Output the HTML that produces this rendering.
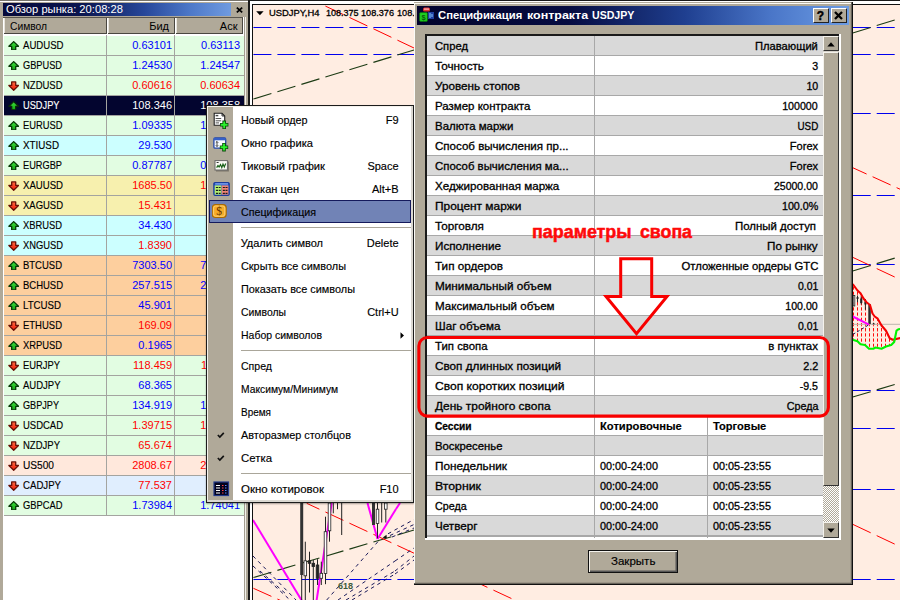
<!DOCTYPE html>
<html lang="ru"><head><meta charset="utf-8"><title>MetaTrader - Спецификация контракта USDJPY</title>
<style>
html,body{margin:0;padding:0;}
body{width:900px;height:600px;overflow:hidden;position:relative;background:#b0a999;font-family:"Liberation Sans",sans-serif;font-size:11px;}
#root{position:absolute;left:0;top:0;width:900px;height:600px;overflow:hidden;}
</style></head>
<body><div id="root">
<section id="chart">
<div style="position:absolute;left:0;top:0;width:900px;height:600px;background:#ffede2"></div>
<svg width="900" height="600" viewBox="0 0 900 600" style="position:absolute;left:0;top:0"><line x1="253.4" y1="27.5" x2="414.0" y2="27.5" stroke="#0000ee" stroke-width="1.1" stroke-dasharray="18.00 6.00" stroke-dashoffset="0.00"/><line x1="253.4" y1="54.5" x2="414.0" y2="54.5" stroke="#0000ee" stroke-width="1.1" stroke-dasharray="18.00 6.00" stroke-dashoffset="0.00"/><line x1="321.0" y1="4.0" x2="414.0" y2="48.0" stroke="#ff0000" stroke-width="1.0" stroke-dasharray="19.91 6.64" stroke-dashoffset="21.68"/><line x1="253.4" y1="99.0" x2="414.0" y2="50.0" stroke="#1c3b14" stroke-width="1.1" stroke-dasharray="18.82 6.27" stroke-dashoffset="0.00"/><line x1="253.4" y1="579.5" x2="414.0" y2="579.5" stroke="#0000ee" stroke-width="1.1" stroke-dasharray="18.00 6.00" stroke-dashoffset="0.00"/><line x1="253.4" y1="577.5" x2="414.0" y2="530.0" stroke="#1c3b14" stroke-width="1.1" stroke-dasharray="18.77 6.26" stroke-dashoffset="0.00"/><line x1="306.7" y1="503.3" x2="414.0" y2="553.2" stroke="#ff0000" stroke-width="1.0" stroke-dasharray="19.85 6.62" stroke-dashoffset="5.85"/><line x1="253.4" y1="588.3" x2="290.0" y2="604.7" stroke="#ff0000" stroke-width="1.0" stroke-dasharray="19.72 6.57" stroke-dashoffset="0.00"/><line x1="253.0" y1="556.0" x2="296.0" y2="600.0" stroke="#1a1a5a" stroke-width="1" stroke-dasharray="3.6 3.8"/><line x1="253.0" y1="566.0" x2="290.0" y2="600.0" stroke="#1a1a5a" stroke-width="1" stroke-dasharray="3.6 3.8"/><line x1="260.0" y1="571.0" x2="286.0" y2="594.0" stroke="#1a1a5a" stroke-width="1" stroke-dasharray="3.6 3.8"/><line x1="326.7" y1="600.0" x2="378.5" y2="541.0" stroke="#1a1a5a" stroke-width="1" stroke-dasharray="3.6 3.8"/><line x1="338.0" y1="600.0" x2="395.0" y2="561.0" stroke="#1a1a5a" stroke-width="1" stroke-dasharray="3.6 3.8"/><line x1="346.0" y1="600.0" x2="395.0" y2="571.0" stroke="#1a1a5a" stroke-width="1" stroke-dasharray="3.6 3.8"/><line x1="352.0" y1="600.0" x2="395.0" y2="574.0" stroke="#1a1a5a" stroke-width="1" stroke-dasharray="3.6 3.8"/><line x1="395.0" y1="561.0" x2="414.0" y2="548.0" stroke="#1a1a5a" stroke-width="1" stroke-dasharray="3.6 3.8"/><line x1="395.0" y1="571.0" x2="414.0" y2="556.0" stroke="#1a1a5a" stroke-width="1" stroke-dasharray="3.6 3.8"/><line x1="395.0" y1="574.0" x2="414.0" y2="560.0" stroke="#1a1a5a" stroke-width="1" stroke-dasharray="3.6 3.8"/><line x1="388.0" y1="533.8" x2="414.0" y2="519.5" stroke="#1a1a5a" stroke-width="1" stroke-dasharray="3.6 3.8"/><line x1="390.0" y1="535.5" x2="414.0" y2="524.5" stroke="#1a1a5a" stroke-width="1" stroke-dasharray="3.6 3.8"/><line x1="392.0" y1="537.0" x2="414.0" y2="528.0" stroke="#1a1a5a" stroke-width="1" stroke-dasharray="3.6 3.8"/><path d="M382.5 537.8 L386.5 534.8 L386.8 538.2 Z" fill="#111"/><line x1="253.0" y1="520.0" x2="302.0" y2="601.0" stroke="#ff00ff" stroke-width="2.0"/><line x1="316.5" y1="601.0" x2="331.7" y2="503.0" stroke="#ff00ff" stroke-width="2.0"/><line x1="367.5" y1="503.0" x2="377.5" y2="539.0" stroke="#ff00ff" stroke-width="2.0"/><line x1="377.5" y1="539.0" x2="396.0" y2="509.0" stroke="#ff00ff" stroke-width="2.0"/><line x1="396.0" y1="509.0" x2="400.0" y2="503.0" stroke="#ff00ff" stroke-width="2.0"/><rect x="300.2" y="503" width="3" height="72" fill="#333"/><line x1="301.7" y1="575.0" x2="301.7" y2="600.0" stroke="#222" stroke-width="1"/><line x1="305.3" y1="541.7" x2="305.3" y2="600.0" stroke="#222" stroke-width="1"/><rect x="304.0" y="560.8" width="2.6" height="15.0" fill="#fff" stroke="#222" stroke-width="0.8"/><line x1="309.5" y1="551.7" x2="309.5" y2="592.5" stroke="#222" stroke-width="1"/><rect x="308.2" y="560.8" width="2.6" height="2.5" fill="#222" stroke="#222" stroke-width="0.8"/><line x1="313.3" y1="560.0" x2="313.3" y2="600.0" stroke="#222" stroke-width="1"/><rect x="312.0" y="563.3" width="2.6" height="3.3" fill="#222" stroke="#222" stroke-width="0.8"/><line x1="317.5" y1="559.2" x2="317.5" y2="585.0" stroke="#222" stroke-width="1"/><rect x="316.2" y="565.0" width="2.6" height="13.3" fill="#222" stroke="#222" stroke-width="0.8"/><line x1="321.3" y1="561.7" x2="321.3" y2="585.0" stroke="#222" stroke-width="1"/><rect x="320.0" y="573.3" width="2.6" height="5.0" fill="#fff" stroke="#222" stroke-width="0.8"/><line x1="325.5" y1="516.7" x2="325.5" y2="584.2" stroke="#222" stroke-width="1"/><rect x="324.2" y="531.7" width="2.6" height="41.7" fill="#fff" stroke="#222" stroke-width="0.8"/><line x1="329.5" y1="503.0" x2="329.5" y2="541.7" stroke="#222" stroke-width="1"/><rect x="328.2" y="503.0" width="2.6" height="27.8" fill="#fff" stroke="#222" stroke-width="0.8"/><line x1="333.3" y1="503.0" x2="333.3" y2="513.3" stroke="#222" stroke-width="1"/><line x1="337.5" y1="503.0" x2="337.5" y2="509.2" stroke="#222" stroke-width="1"/><line x1="341.7" y1="503.0" x2="341.7" y2="535.0" stroke="#222" stroke-width="1"/><rect x="372" y="503" width="3" height="22" fill="#333"/><line x1="377.5" y1="503.0" x2="377.5" y2="538.3" stroke="#222" stroke-width="1"/><rect x="376.2" y="509.2" width="2.6" height="14.2" fill="#fff" stroke="#222" stroke-width="0.8"/><line x1="381.7" y1="503.0" x2="381.7" y2="522.5" stroke="#222" stroke-width="1"/><line x1="385.8" y1="503.0" x2="385.8" y2="522.5" stroke="#222" stroke-width="1"/><rect x="384.5" y="503.0" width="2.6" height="6.2" fill="#fff" stroke="#222" stroke-width="0.8"/><text x="338" y="588.5" font-size="9" font-weight="bold" fill="#3d5a3a" font-family="Liberation Sans">618</text><line x1="414.0" y1="553.2" x2="520.0" y2="602.5" stroke="#ff0000" stroke-width="1.0" stroke-dasharray="19.85 6.62" stroke-dashoffset="18.31"/><line x1="852.7" y1="27.5" x2="900.0" y2="27.5" stroke="#0000ee" stroke-width="1.1" stroke-dasharray="18.00 6.00" stroke-dashoffset="0.00"/><line x1="852.7" y1="54.5" x2="900.0" y2="54.5" stroke="#0000ee" stroke-width="1.1" stroke-dasharray="18.00 6.00" stroke-dashoffset="0.00"/><line x1="852.7" y1="113.5" x2="900.0" y2="113.5" stroke="#0000ee" stroke-width="1.1" stroke-dasharray="18.00 6.00" stroke-dashoffset="0.00"/><line x1="852.7" y1="195.5" x2="900.0" y2="195.5" stroke="#0000ee" stroke-width="1.1" stroke-dasharray="18.00 6.00" stroke-dashoffset="0.00"/><line x1="852.7" y1="264.5" x2="900.0" y2="264.5" stroke="#0000ee" stroke-width="1.1" stroke-dasharray="18.00 6.00" stroke-dashoffset="0.00"/><line x1="852.7" y1="390.5" x2="900.0" y2="390.5" stroke="#0000ee" stroke-width="1.1" stroke-dasharray="18.00 6.00" stroke-dashoffset="0.00"/><line x1="852.7" y1="428.5" x2="900.0" y2="428.5" stroke="#0000ee" stroke-width="1.1" stroke-dasharray="18.00 6.00" stroke-dashoffset="0.00"/><line x1="852.7" y1="489.5" x2="900.0" y2="489.5" stroke="#0000ee" stroke-width="1.1" stroke-dasharray="18.00 6.00" stroke-dashoffset="0.00"/><line x1="852.7" y1="579.5" x2="900.0" y2="579.5" stroke="#0000ee" stroke-width="1.1" stroke-dasharray="18.00 6.00" stroke-dashoffset="0.00"/><line x1="852.7" y1="33.0" x2="900.0" y2="18.4" stroke="#1c3b14" stroke-width="1.1" stroke-dasharray="18.84 6.28" stroke-dashoffset="0.00"/><line x1="852.7" y1="167.7" x2="900.0" y2="189.2" stroke="#ff0000" stroke-width="1.0" stroke-dasharray="19.77 6.59" stroke-dashoffset="4.50"/><line x1="852.7" y1="257.3" x2="900.0" y2="279.5" stroke="#ff0000" stroke-width="1.0" stroke-dasharray="19.88 6.63" stroke-dashoffset="0.00"/><line x1="852.7" y1="271.0" x2="900.0" y2="256.5" stroke="#1c3b14" stroke-width="1.1" stroke-dasharray="18.83 6.28" stroke-dashoffset="0.00"/><line x1="852.7" y1="397.0" x2="900.0" y2="383.0" stroke="#1c3b14" stroke-width="1.1" stroke-dasharray="18.77 6.26" stroke-dashoffset="0.00"/><line x1="852.7" y1="524.3" x2="900.0" y2="546.6" stroke="#ff0000" stroke-width="1.0" stroke-dasharray="19.90 6.63" stroke-dashoffset="0.00"/><defs><pattern id="hp" x="853" y="0.5" width="4" height="5.2" patternUnits="userSpaceOnUse"><rect x="0" y="0" width="1" height="3.2" fill="#ff0a0a"/></pattern></defs><polygon points="852.7,284 857.5,290.5 860.5,293.2 863.5,298.5 866.5,302.2 870,305 872.5,313.5 874.7,316.5 877.7,318.7 881.5,325.5 886,330.7 889.7,338.2 892.7,339.7 894.2,342 891.2,345 886,346.5 881.5,348.7 875.5,347.5 873.2,348.7 869,348.7 865,345 860.5,344.2 857.5,341.2 852.7,339.7" fill="url(#hp)"/><line x1="853.0" y1="324.3" x2="900.0" y2="324.3" stroke="#bdb5ad" stroke-width="1"/><rect x="853.2" y="295.5" width="1.6" height="10.5" fill="#fff" stroke="#222" stroke-width="0.8"/><line x1="857.5" y1="295.5" x2="857.5" y2="302.3" stroke="#222" stroke-width="1"/><rect x="856.6" y="297" width="1.9" height="2" fill="#222"/><line x1="861.2" y1="296.2" x2="861.2" y2="304.5" stroke="#222" stroke-width="1"/><rect x="860.2" y="298.5" width="2.1" height="4.5" fill="#222"/><line x1="865.4" y1="299.0" x2="865.4" y2="309.7" stroke="#222" stroke-width="1"/><rect x="864.4" y="301.5" width="2.1" height="3" fill="#222"/><rect x="868.3" y="304.2" width="2.5" height="19.8" fill="#2a2a2a"/><path d="M872.3 324.3 L873.6 322.4 L875 324.3 Z" fill="#222"/><line x1="852.7" y1="316.5" x2="869.0" y2="324.7" stroke="#ff00ff" stroke-width="2"/><line x1="852.7" y1="334.5" x2="869" y2="324.7" stroke="#1a1a5a" stroke-width="1" stroke-dasharray="3 2"/><polyline points="852.7,284 857.5,290.5 860.5,293.2 863.5,298.5 866.5,302.2 870,305 872.5,313.5 874.7,316.5 877.7,318.7 881.5,325.5 886,330.7 889.7,338.2 892.7,339.7 900.5,338" fill="none" stroke="#f40000" stroke-width="2.1" stroke-linejoin="round"/><polyline points="852.7,339.7 857.5,341.2 860.5,344.2 865,345 869,348.7 873.2,348.7 875.5,347.5 881.5,348.7 886,346.5 891.2,345 894.2,342 896.5,330.7 898.7,329.2 900.5,329" fill="none" stroke="#00f400" stroke-width="2.1" stroke-linejoin="round"/></svg>
<div style="position:absolute;left:248px;top:0px;width:652px;height:1.4px;background:#1a1a1a;"></div>
<div style="position:absolute;left:250px;top:1.4px;width:650px;height:2.7px;background:#fff;"></div>
<div style="position:absolute;left:252px;top:4px;width:648px;height:1px;background:#111;"></div>
<div style="position:absolute;left:248px;top:0px;width:1.9px;height:600px;background:#1a1a1a;"></div>
<div style="position:absolute;left:249.9px;top:1.4px;width:2.1px;height:598.6px;background:#fff;"></div>
<div style="position:absolute;left:252px;top:4px;width:1px;height:596px;background:#111;"></div>
<svg width="10" height="6" viewBox="0 0 10 6" style="position:absolute;left:255.7px;top:11.3px"><path d="M0.2 0.3 L7.6 0.3 L3.9 4.2 Z" fill="#000"/></svg>
<span style="position:absolute;top:7.96px;font-size:9.5px;line-height:9.5px;color:#000;white-space:nowrap;-webkit-text-stroke:0.3px #000;left:268.60px;transform-origin:0 0;transform:scaleX(0.9873);">USDJPY,H4</span>
<span style="position:absolute;top:7.96px;font-size:9.5px;line-height:9.5px;color:#000;white-space:nowrap;-webkit-text-stroke:0.3px #000;left:325.60px;transform-origin:0 0;transform:scaleX(0.9491);">108.375</span>
<span style="position:absolute;top:7.96px;font-size:9.5px;line-height:9.5px;color:#000;white-space:nowrap;-webkit-text-stroke:0.3px #000;left:361.00px;transform-origin:0 0;transform:scaleX(0.9607);">108.376</span>
<span style="position:absolute;top:7.96px;font-size:9.5px;line-height:9.5px;color:#000;white-space:nowrap;-webkit-text-stroke:0.3px #000;left:397.40px;transform-origin:0 0;transform:scaleX(0.9607);">108.376</span>
</section>
<section id="market-watch">
<div style="position:absolute;left:0px;top:0px;width:248px;height:600px;background:#b0a999;"></div>
<div style="position:absolute;left:0px;top:0px;width:248px;height:0.8px;background:#77736a;"></div>
<div style="position:absolute;left:0px;top:0.8px;width:248px;height:1.2px;background:#fff;"></div>
<div style="position:absolute;left:3px;top:3px;width:228px;height:13.2px;background:linear-gradient(90deg,#06093a 0%,#0a1650 35%,#27479a 62%,#4d78c8 82%,#6f9be0 100%)"></div>
<span style="position:absolute;top:4.09px;font-size:11px;line-height:11px;color:#fff;white-space:nowrap;left:6.00px;transform-origin:0 0;transform:scaleX(1.0161);">Обзор рынка: 20:08:28</span>
<svg width="7" height="6" viewBox="0 0 7 6" style="position:absolute;left:235.7px;top:6.8px"><path d="M0.8 0.6 L6.2 5.4 M6.2 0.6 L0.8 5.4" stroke="#000" stroke-width="1.7"/></svg>
<div style="position:absolute;left:3px;top:17px;width:241.3px;height:19px;background:#fff;"></div>
<div style="position:absolute;left:3px;top:17px;width:240px;height:1px;background:#5a564e;"></div>
<div style="position:absolute;left:3.5px;top:18px;width:103px;height:15.8px;background:#b0a999;box-sizing:border-box;border-right:1px solid #4a4740;border-bottom:1px solid #4a4740;box-shadow:inset 1px 0 0 #e8e4dc"></div>
<div style="position:absolute;left:108px;top:18px;width:66.7px;height:15.8px;background:#b0a999;box-sizing:border-box;border-right:1px solid #4a4740;border-bottom:1px solid #4a4740;box-shadow:inset 1px 0 0 #e8e4dc"></div>
<div style="position:absolute;left:176.2px;top:18px;width:66.7px;height:15.8px;background:#b0a999;box-sizing:border-box;border-right:1px solid #4a4740;border-bottom:1px solid #4a4740;box-shadow:inset 1px 0 0 #e8e4dc"></div>
<span style="position:absolute;top:21.19px;font-size:11px;line-height:11px;color:#000;white-space:nowrap;left:9.60px;transform-origin:0 0;transform:scaleX(0.9327);">Символ</span>
<span style="position:absolute;top:21.09px;font-size:11px;line-height:11px;color:#000;white-space:nowrap;right:731.00px;transform-origin:100% 0;">Бид</span>
<span style="position:absolute;top:21.09px;font-size:11px;line-height:11px;color:#000;white-space:nowrap;right:662.50px;transform-origin:100% 0;">Аск</span>
<div style="position:absolute;left:3px;top:35px;width:241px;height:565px;background:#fff;"></div>
<svg width="0" height="0" style="position:absolute"><defs><linearGradient id="gu" x1="0" y1="0" x2="0" y2="1"><stop offset="0" stop-color="#3ee03e"/><stop offset="1" stop-color="#12a812"/></linearGradient><linearGradient id="gd" x1="0" y1="0" x2="0" y2="1"><stop offset="0" stop-color="#ff6a40"/><stop offset="1" stop-color="#f01808"/></linearGradient></defs></svg>
<div style="position:absolute;left:3.5px;top:35.5px;width:240.5px;height:19.3px;background:#e2fde2;"></div>
<div style="position:absolute;left:3.5px;top:54.8px;width:240.5px;height:1.2px;background:#a4a4a0;"></div>
<svg width="11.4" height="9.8" viewBox="0 0 13 11" style="position:absolute;left:7.8px;top:40.7px"><path d="M6.5 0.6 L12 6 L8.8 6 L8.8 10 L4.2 10 L4.2 6 L1 6 Z" fill="url(#gu)" stroke="#063a06" stroke-width="1.5" stroke-linejoin="round"/></svg>
<span style="position:absolute;top:39.89px;font-size:11px;line-height:11px;color:#000;white-space:nowrap;-webkit-text-stroke:0.15px #000;left:23.10px;transform-origin:0 0;transform:scaleX(0.8721);">AUDUSD</span>
<span style="position:absolute;top:39.89px;font-size:11px;line-height:11px;color:#0000ff;white-space:nowrap;right:728.00px;transform-origin:100% 0;">0.63101</span>
<span style="position:absolute;top:39.89px;font-size:11px;line-height:11px;color:#0000ff;white-space:nowrap;right:660.00px;transform-origin:100% 0;">0.63113</span>
<div style="position:absolute;left:3.5px;top:55.5px;width:240.5px;height:19.3px;background:#e2fde2;"></div>
<div style="position:absolute;left:3.5px;top:74.8px;width:240.5px;height:1.2px;background:#a4a4a0;"></div>
<svg width="11.4" height="9.8" viewBox="0 0 13 11" style="position:absolute;left:7.8px;top:60.7px"><path d="M6.5 0.6 L12 6 L8.8 6 L8.8 10 L4.2 10 L4.2 6 L1 6 Z" fill="url(#gu)" stroke="#063a06" stroke-width="1.5" stroke-linejoin="round"/></svg>
<span style="position:absolute;top:59.89px;font-size:11px;line-height:11px;color:#000;white-space:nowrap;-webkit-text-stroke:0.15px #000;left:23.10px;transform-origin:0 0;transform:scaleX(0.8393);">GBPUSD</span>
<span style="position:absolute;top:59.89px;font-size:11px;line-height:11px;color:#0000ff;white-space:nowrap;right:728.00px;transform-origin:100% 0;">1.24530</span>
<span style="position:absolute;top:59.89px;font-size:11px;line-height:11px;color:#0000ff;white-space:nowrap;right:660.00px;transform-origin:100% 0;">1.24547</span>
<div style="position:absolute;left:3.5px;top:75.5px;width:240.5px;height:19.3px;background:#e2fde2;"></div>
<div style="position:absolute;left:3.5px;top:94.8px;width:240.5px;height:1.2px;background:#a4a4a0;"></div>
<svg width="11.4" height="9.8" viewBox="0 0 13 11" style="position:absolute;left:7.8px;top:80.9px"><path d="M6.5 10.4 L12 5 L8.8 5 L8.8 1 L4.2 1 L4.2 5 L1 5 Z" fill="url(#gd)" stroke="#6a1006" stroke-width="1.5" stroke-linejoin="round"/></svg>
<span style="position:absolute;top:79.89px;font-size:11px;line-height:11px;color:#000;white-space:nowrap;-webkit-text-stroke:0.15px #000;left:23.10px;transform-origin:0 0;transform:scaleX(0.8622);">NZDUSD</span>
<span style="position:absolute;top:79.89px;font-size:11px;line-height:11px;color:#ff0000;white-space:nowrap;right:728.00px;transform-origin:100% 0;">0.60616</span>
<span style="position:absolute;top:79.89px;font-size:11px;line-height:11px;color:#ff0000;white-space:nowrap;right:660.00px;transform-origin:100% 0;">0.60634</span>
<div style="position:absolute;left:3.5px;top:95.5px;width:240.5px;height:19.3px;background:#03052f;"></div>
<div style="position:absolute;left:3.5px;top:114.8px;width:240.5px;height:1.2px;background:#a4a4a0;"></div>
<svg width="11.4" height="9.8" viewBox="0 0 13 11" style="position:absolute;left:7.8px;top:100.7px"><path d="M6.5 0.6 L12 6 L8.8 6 L8.8 10 L4.2 10 L4.2 6 L1 6 Z" fill="url(#gu)" stroke="#0a2a0a" stroke-width="1.5" stroke-linejoin="round"/></svg>
<span style="position:absolute;top:99.89px;font-size:11px;line-height:11px;color:#fff;white-space:nowrap;-webkit-text-stroke:0.15px #fff;left:23.10px;transform-origin:0 0;transform:scaleX(0.8409);">USDJPY</span>
<span style="position:absolute;top:99.89px;font-size:11px;line-height:11px;color:#fff;white-space:nowrap;right:728.00px;transform-origin:100% 0;">108.346</span>
<span style="position:absolute;top:99.89px;font-size:11px;line-height:11px;color:#fff;white-space:nowrap;right:660.00px;transform-origin:100% 0;">108.358</span>
<div style="position:absolute;left:3.5px;top:115.5px;width:240.5px;height:19.3px;background:#e2fde2;"></div>
<div style="position:absolute;left:3.5px;top:134.8px;width:240.5px;height:1.2px;background:#a4a4a0;"></div>
<svg width="11.4" height="9.8" viewBox="0 0 13 11" style="position:absolute;left:7.8px;top:120.7px"><path d="M6.5 0.6 L12 6 L8.8 6 L8.8 10 L4.2 10 L4.2 6 L1 6 Z" fill="url(#gu)" stroke="#063a06" stroke-width="1.5" stroke-linejoin="round"/></svg>
<span style="position:absolute;top:119.89px;font-size:11px;line-height:11px;color:#000;white-space:nowrap;-webkit-text-stroke:0.15px #000;left:23.10px;transform-origin:0 0;transform:scaleX(0.8506);">EURUSD</span>
<span style="position:absolute;top:119.89px;font-size:11px;line-height:11px;color:#0000ff;white-space:nowrap;right:728.00px;transform-origin:100% 0;">1.09335</span>
<span style="position:absolute;top:119.89px;font-size:11px;line-height:11px;color:#0000ff;white-space:nowrap;right:660.00px;transform-origin:100% 0;">1.09347</span>
<div style="position:absolute;left:3.5px;top:135.5px;width:240.5px;height:19.3px;background:#ccffff;"></div>
<div style="position:absolute;left:3.5px;top:154.8px;width:240.5px;height:1.2px;background:#a4a4a0;"></div>
<svg width="11.4" height="9.8" viewBox="0 0 13 11" style="position:absolute;left:7.8px;top:140.7px"><path d="M6.5 0.6 L12 6 L8.8 6 L8.8 10 L4.2 10 L4.2 6 L1 6 Z" fill="url(#gu)" stroke="#063a06" stroke-width="1.5" stroke-linejoin="round"/></svg>
<span style="position:absolute;top:139.89px;font-size:11px;line-height:11px;color:#000;white-space:nowrap;-webkit-text-stroke:0.15px #000;left:23.10px;transform-origin:0 0;transform:scaleX(0.8923);">XTIUSD</span>
<span style="position:absolute;top:139.89px;font-size:11px;line-height:11px;color:#0000ff;white-space:nowrap;right:728.00px;transform-origin:100% 0;">29.530</span>
<span style="position:absolute;top:139.89px;font-size:11px;line-height:11px;color:#0000ff;white-space:nowrap;right:660.00px;transform-origin:100% 0;transform:scaleX(0.9499);">29.560</span>
<div style="position:absolute;left:3.5px;top:155.5px;width:240.5px;height:19.3px;background:#e2fde2;"></div>
<div style="position:absolute;left:3.5px;top:174.8px;width:240.5px;height:1.2px;background:#a4a4a0;"></div>
<svg width="11.4" height="9.8" viewBox="0 0 13 11" style="position:absolute;left:7.8px;top:160.7px"><path d="M6.5 0.6 L12 6 L8.8 6 L8.8 10 L4.2 10 L4.2 6 L1 6 Z" fill="url(#gu)" stroke="#063a06" stroke-width="1.5" stroke-linejoin="round"/></svg>
<span style="position:absolute;top:159.89px;font-size:11px;line-height:11px;color:#000;white-space:nowrap;-webkit-text-stroke:0.15px #000;left:23.10px;transform-origin:0 0;transform:scaleX(0.8393);">EURGBP</span>
<span style="position:absolute;top:159.89px;font-size:11px;line-height:11px;color:#0000ff;white-space:nowrap;right:728.00px;transform-origin:100% 0;">0.87787</span>
<span style="position:absolute;top:159.89px;font-size:11px;line-height:11px;color:#0000ff;white-space:nowrap;right:660.00px;transform-origin:100% 0;">0.87812</span>
<div style="position:absolute;left:3.5px;top:175.5px;width:240.5px;height:19.3px;background:#f7f0ae;"></div>
<div style="position:absolute;left:3.5px;top:194.8px;width:240.5px;height:1.2px;background:#a4a4a0;"></div>
<svg width="11.4" height="9.8" viewBox="0 0 13 11" style="position:absolute;left:7.8px;top:180.9px"><path d="M6.5 10.4 L12 5 L8.8 5 L8.8 1 L4.2 1 L4.2 5 L1 5 Z" fill="url(#gd)" stroke="#6a1006" stroke-width="1.5" stroke-linejoin="round"/></svg>
<span style="position:absolute;top:179.89px;font-size:11px;line-height:11px;color:#000;white-space:nowrap;-webkit-text-stroke:0.15px #000;left:23.10px;transform-origin:0 0;transform:scaleX(0.8725);">XAUUSD</span>
<span style="position:absolute;top:179.89px;font-size:11px;line-height:11px;color:#ff0000;white-space:nowrap;right:728.00px;transform-origin:100% 0;">1685.50</span>
<span style="position:absolute;top:179.89px;font-size:11px;line-height:11px;color:#ff0000;white-space:nowrap;right:660.00px;transform-origin:100% 0;">1685.95</span>
<div style="position:absolute;left:3.5px;top:195.5px;width:240.5px;height:19.3px;background:#f7f0ae;"></div>
<div style="position:absolute;left:3.5px;top:214.8px;width:240.5px;height:1.2px;background:#a4a4a0;"></div>
<svg width="11.4" height="9.8" viewBox="0 0 13 11" style="position:absolute;left:7.8px;top:200.9px"><path d="M6.5 10.4 L12 5 L8.8 5 L8.8 1 L4.2 1 L4.2 5 L1 5 Z" fill="url(#gd)" stroke="#6a1006" stroke-width="1.5" stroke-linejoin="round"/></svg>
<span style="position:absolute;top:199.89px;font-size:11px;line-height:11px;color:#000;white-space:nowrap;-webkit-text-stroke:0.15px #000;left:23.10px;transform-origin:0 0;transform:scaleX(0.8608);">XAGUSD</span>
<span style="position:absolute;top:199.89px;font-size:11px;line-height:11px;color:#ff0000;white-space:nowrap;right:728.00px;transform-origin:100% 0;">15.431</span>
<span style="position:absolute;top:199.89px;font-size:11px;line-height:11px;color:#ff0000;white-space:nowrap;right:660.00px;transform-origin:100% 0;transform:scaleX(0.9499);">15.461</span>
<div style="position:absolute;left:3.5px;top:215.5px;width:240.5px;height:19.3px;background:#ccffff;"></div>
<div style="position:absolute;left:3.5px;top:234.8px;width:240.5px;height:1.2px;background:#a4a4a0;"></div>
<svg width="11.4" height="9.8" viewBox="0 0 13 11" style="position:absolute;left:7.8px;top:220.7px"><path d="M6.5 0.6 L12 6 L8.8 6 L8.8 10 L4.2 10 L4.2 6 L1 6 Z" fill="url(#gu)" stroke="#063a06" stroke-width="1.5" stroke-linejoin="round"/></svg>
<span style="position:absolute;top:219.89px;font-size:11px;line-height:11px;color:#000;white-space:nowrap;-webkit-text-stroke:0.15px #000;left:23.10px;transform-origin:0 0;transform:scaleX(0.8507);">XBRUSD</span>
<span style="position:absolute;top:219.89px;font-size:11px;line-height:11px;color:#0000ff;white-space:nowrap;right:728.00px;transform-origin:100% 0;">34.430</span>
<span style="position:absolute;top:219.89px;font-size:11px;line-height:11px;color:#0000ff;white-space:nowrap;right:660.00px;transform-origin:100% 0;transform:scaleX(0.9499);">34.460</span>
<div style="position:absolute;left:3.5px;top:235.5px;width:240.5px;height:19.3px;background:#ccffff;"></div>
<div style="position:absolute;left:3.5px;top:254.8px;width:240.5px;height:1.2px;background:#a4a4a0;"></div>
<svg width="11.4" height="9.8" viewBox="0 0 13 11" style="position:absolute;left:7.8px;top:240.9px"><path d="M6.5 10.4 L12 5 L8.8 5 L8.8 1 L4.2 1 L4.2 5 L1 5 Z" fill="url(#gd)" stroke="#6a1006" stroke-width="1.5" stroke-linejoin="round"/></svg>
<span style="position:absolute;top:239.89px;font-size:11px;line-height:11px;color:#000;white-space:nowrap;-webkit-text-stroke:0.15px #000;left:23.10px;transform-origin:0 0;transform:scaleX(0.8499);">XNGUSD</span>
<span style="position:absolute;top:239.89px;font-size:11px;line-height:11px;color:#ff0000;white-space:nowrap;right:728.00px;transform-origin:100% 0;">1.8390</span>
<span style="position:absolute;top:239.89px;font-size:11px;line-height:11px;color:#ff0000;white-space:nowrap;right:660.00px;transform-origin:100% 0;transform:scaleX(0.9499);">1.8420</span>
<div style="position:absolute;left:3.5px;top:255.5px;width:240.5px;height:19.3px;background:#fdcf9e;"></div>
<div style="position:absolute;left:3.5px;top:274.8px;width:240.5px;height:1.2px;background:#a4a4a0;"></div>
<svg width="11.4" height="9.8" viewBox="0 0 13 11" style="position:absolute;left:7.8px;top:260.7px"><path d="M6.5 0.6 L12 6 L8.8 6 L8.8 10 L4.2 10 L4.2 6 L1 6 Z" fill="url(#gu)" stroke="#063a06" stroke-width="1.5" stroke-linejoin="round"/></svg>
<span style="position:absolute;top:259.89px;font-size:11px;line-height:11px;color:#000;white-space:nowrap;-webkit-text-stroke:0.15px #000;left:23.10px;transform-origin:0 0;transform:scaleX(0.8625);">BTCUSD</span>
<span style="position:absolute;top:259.89px;font-size:11px;line-height:11px;color:#0000ff;white-space:nowrap;right:728.00px;transform-origin:100% 0;">7303.50</span>
<span style="position:absolute;top:259.89px;font-size:11px;line-height:11px;color:#0000ff;white-space:nowrap;right:660.00px;transform-origin:100% 0;">7328.50</span>
<div style="position:absolute;left:3.5px;top:275.5px;width:240.5px;height:19.3px;background:#fdcf9e;"></div>
<div style="position:absolute;left:3.5px;top:294.8px;width:240.5px;height:1.2px;background:#a4a4a0;"></div>
<svg width="11.4" height="9.8" viewBox="0 0 13 11" style="position:absolute;left:7.8px;top:280.7px"><path d="M6.5 0.6 L12 6 L8.8 6 L8.8 10 L4.2 10 L4.2 6 L1 6 Z" fill="url(#gu)" stroke="#063a06" stroke-width="1.5" stroke-linejoin="round"/></svg>
<span style="position:absolute;top:279.89px;font-size:11px;line-height:11px;color:#000;white-space:nowrap;-webkit-text-stroke:0.15px #000;left:23.10px;transform-origin:0 0;transform:scaleX(0.8614);">BCHUSD</span>
<span style="position:absolute;top:279.89px;font-size:11px;line-height:11px;color:#0000ff;white-space:nowrap;right:728.00px;transform-origin:100% 0;">257.515</span>
<span style="position:absolute;top:279.89px;font-size:11px;line-height:11px;color:#0000ff;white-space:nowrap;right:660.00px;transform-origin:100% 0;">259.015</span>
<div style="position:absolute;left:3.5px;top:295.5px;width:240.5px;height:19.3px;background:#fdcf9e;"></div>
<div style="position:absolute;left:3.5px;top:314.8px;width:240.5px;height:1.2px;background:#a4a4a0;"></div>
<svg width="11.4" height="9.8" viewBox="0 0 13 11" style="position:absolute;left:7.8px;top:300.7px"><path d="M6.5 0.6 L12 6 L8.8 6 L8.8 10 L4.2 10 L4.2 6 L1 6 Z" fill="url(#gu)" stroke="#063a06" stroke-width="1.5" stroke-linejoin="round"/></svg>
<span style="position:absolute;top:299.89px;font-size:11px;line-height:11px;color:#000;white-space:nowrap;-webkit-text-stroke:0.15px #000;left:23.10px;transform-origin:0 0;transform:scaleX(0.8799);">LTCUSD</span>
<span style="position:absolute;top:299.89px;font-size:11px;line-height:11px;color:#0000ff;white-space:nowrap;right:728.00px;transform-origin:100% 0;">45.901</span>
<span style="position:absolute;top:299.89px;font-size:11px;line-height:11px;color:#0000ff;white-space:nowrap;right:660.00px;transform-origin:100% 0;transform:scaleX(0.9499);">46.201</span>
<div style="position:absolute;left:3.5px;top:315.5px;width:240.5px;height:19.3px;background:#fdcf9e;"></div>
<div style="position:absolute;left:3.5px;top:334.8px;width:240.5px;height:1.2px;background:#a4a4a0;"></div>
<svg width="11.4" height="9.8" viewBox="0 0 13 11" style="position:absolute;left:7.8px;top:320.9px"><path d="M6.5 10.4 L12 5 L8.8 5 L8.8 1 L4.2 1 L4.2 5 L1 5 Z" fill="url(#gd)" stroke="#6a1006" stroke-width="1.5" stroke-linejoin="round"/></svg>
<span style="position:absolute;top:319.89px;font-size:11px;line-height:11px;color:#000;white-space:nowrap;-webkit-text-stroke:0.15px #000;left:23.10px;transform-origin:0 0;transform:scaleX(0.8625);">ETHUSD</span>
<span style="position:absolute;top:319.89px;font-size:11px;line-height:11px;color:#ff0000;white-space:nowrap;right:728.00px;transform-origin:100% 0;">169.09</span>
<span style="position:absolute;top:319.89px;font-size:11px;line-height:11px;color:#ff0000;white-space:nowrap;right:660.00px;transform-origin:100% 0;transform:scaleX(0.9499);">170.09</span>
<div style="position:absolute;left:3.5px;top:335.5px;width:240.5px;height:19.3px;background:#fdcf9e;"></div>
<div style="position:absolute;left:3.5px;top:354.8px;width:240.5px;height:1.2px;background:#a4a4a0;"></div>
<svg width="11.4" height="9.8" viewBox="0 0 13 11" style="position:absolute;left:7.8px;top:340.7px"><path d="M6.5 0.6 L12 6 L8.8 6 L8.8 10 L4.2 10 L4.2 6 L1 6 Z" fill="url(#gu)" stroke="#063a06" stroke-width="1.5" stroke-linejoin="round"/></svg>
<span style="position:absolute;top:339.89px;font-size:11px;line-height:11px;color:#000;white-space:nowrap;-webkit-text-stroke:0.15px #000;left:23.10px;transform-origin:0 0;transform:scaleX(0.8507);">XRPUSD</span>
<span style="position:absolute;top:339.89px;font-size:11px;line-height:11px;color:#0000ff;white-space:nowrap;right:728.00px;transform-origin:100% 0;">0.1965</span>
<span style="position:absolute;top:339.89px;font-size:11px;line-height:11px;color:#0000ff;white-space:nowrap;right:660.00px;transform-origin:100% 0;transform:scaleX(0.9499);">0.1985</span>
<div style="position:absolute;left:3.5px;top:355.5px;width:240.5px;height:19.3px;background:#e2fde2;"></div>
<div style="position:absolute;left:3.5px;top:374.8px;width:240.5px;height:1.2px;background:#a4a4a0;"></div>
<svg width="11.4" height="9.8" viewBox="0 0 13 11" style="position:absolute;left:7.8px;top:360.9px"><path d="M6.5 10.4 L12 5 L8.8 5 L8.8 1 L4.2 1 L4.2 5 L1 5 Z" fill="url(#gd)" stroke="#6a1006" stroke-width="1.5" stroke-linejoin="round"/></svg>
<span style="position:absolute;top:359.89px;font-size:11px;line-height:11px;color:#000;white-space:nowrap;-webkit-text-stroke:0.15px #000;left:23.10px;transform-origin:0 0;transform:scaleX(0.8524);">EURJPY</span>
<span style="position:absolute;top:359.89px;font-size:11px;line-height:11px;color:#ff0000;white-space:nowrap;right:728.00px;transform-origin:100% 0;">118.459</span>
<span style="position:absolute;top:359.89px;font-size:11px;line-height:11px;color:#ff0000;white-space:nowrap;right:660.00px;transform-origin:100% 0;">118.482</span>
<div style="position:absolute;left:3.5px;top:375.5px;width:240.5px;height:19.3px;background:#e2fde2;"></div>
<div style="position:absolute;left:3.5px;top:394.8px;width:240.5px;height:1.2px;background:#a4a4a0;"></div>
<svg width="11.4" height="9.8" viewBox="0 0 13 11" style="position:absolute;left:7.8px;top:380.7px"><path d="M6.5 0.6 L12 6 L8.8 6 L8.8 10 L4.2 10 L4.2 6 L1 6 Z" fill="url(#gu)" stroke="#063a06" stroke-width="1.5" stroke-linejoin="round"/></svg>
<span style="position:absolute;top:379.89px;font-size:11px;line-height:11px;color:#000;white-space:nowrap;-webkit-text-stroke:0.15px #000;left:23.10px;transform-origin:0 0;transform:scaleX(0.8639);">AUDJPY</span>
<span style="position:absolute;top:379.89px;font-size:11px;line-height:11px;color:#0000ff;white-space:nowrap;right:728.00px;transform-origin:100% 0;">68.365</span>
<span style="position:absolute;top:379.89px;font-size:11px;line-height:11px;color:#0000ff;white-space:nowrap;right:660.00px;transform-origin:100% 0;transform:scaleX(0.9499);">68.392</span>
<div style="position:absolute;left:3.5px;top:395.5px;width:240.5px;height:19.3px;background:#e2fde2;"></div>
<div style="position:absolute;left:3.5px;top:414.8px;width:240.5px;height:1.2px;background:#a4a4a0;"></div>
<svg width="11.4" height="9.8" viewBox="0 0 13 11" style="position:absolute;left:7.8px;top:400.7px"><path d="M6.5 0.6 L12 6 L8.8 6 L8.8 10 L4.2 10 L4.2 6 L1 6 Z" fill="url(#gu)" stroke="#063a06" stroke-width="1.5" stroke-linejoin="round"/></svg>
<span style="position:absolute;top:399.89px;font-size:11px;line-height:11px;color:#000;white-space:nowrap;-webkit-text-stroke:0.15px #000;left:23.10px;transform-origin:0 0;transform:scaleX(0.8288);">GBPJPY</span>
<span style="position:absolute;top:399.89px;font-size:11px;line-height:11px;color:#0000ff;white-space:nowrap;right:728.00px;transform-origin:100% 0;">134.919</span>
<span style="position:absolute;top:399.89px;font-size:11px;line-height:11px;color:#0000ff;white-space:nowrap;right:660.00px;transform-origin:100% 0;">134.962</span>
<div style="position:absolute;left:3.5px;top:415.5px;width:240.5px;height:19.3px;background:#e2fde2;"></div>
<div style="position:absolute;left:3.5px;top:434.8px;width:240.5px;height:1.2px;background:#a4a4a0;"></div>
<svg width="11.4" height="9.8" viewBox="0 0 13 11" style="position:absolute;left:7.8px;top:420.9px"><path d="M6.5 10.4 L12 5 L8.8 5 L8.8 1 L4.2 1 L4.2 5 L1 5 Z" fill="url(#gd)" stroke="#6a1006" stroke-width="1.5" stroke-linejoin="round"/></svg>
<span style="position:absolute;top:419.89px;font-size:11px;line-height:11px;color:#000;white-space:nowrap;-webkit-text-stroke:0.15px #000;left:23.10px;transform-origin:0 0;transform:scaleX(0.8614);">USDCAD</span>
<span style="position:absolute;top:419.89px;font-size:11px;line-height:11px;color:#ff0000;white-space:nowrap;right:728.00px;transform-origin:100% 0;">1.39715</span>
<span style="position:absolute;top:419.89px;font-size:11px;line-height:11px;color:#ff0000;white-space:nowrap;right:660.00px;transform-origin:100% 0;">1.39738</span>
<div style="position:absolute;left:3.5px;top:435.5px;width:240.5px;height:19.3px;background:#e2fde2;"></div>
<div style="position:absolute;left:3.5px;top:454.8px;width:240.5px;height:1.2px;background:#a4a4a0;"></div>
<svg width="11.4" height="9.8" viewBox="0 0 13 11" style="position:absolute;left:7.8px;top:440.9px"><path d="M6.5 10.4 L12 5 L8.8 5 L8.8 1 L4.2 1 L4.2 5 L1 5 Z" fill="url(#gd)" stroke="#6a1006" stroke-width="1.5" stroke-linejoin="round"/></svg>
<span style="position:absolute;top:439.89px;font-size:11px;line-height:11px;color:#000;white-space:nowrap;-webkit-text-stroke:0.15px #000;left:23.10px;transform-origin:0 0;transform:scaleX(0.8649);">NZDJPY</span>
<span style="position:absolute;top:439.89px;font-size:11px;line-height:11px;color:#ff0000;white-space:nowrap;right:728.00px;transform-origin:100% 0;">65.674</span>
<span style="position:absolute;top:439.89px;font-size:11px;line-height:11px;color:#ff0000;white-space:nowrap;right:660.00px;transform-origin:100% 0;transform:scaleX(0.9499);">65.704</span>
<div style="position:absolute;left:3.5px;top:455.5px;width:240.5px;height:19.3px;background:#ffe8dc;"></div>
<div style="position:absolute;left:3.5px;top:474.8px;width:240.5px;height:1.2px;background:#a4a4a0;"></div>
<svg width="11.4" height="9.8" viewBox="0 0 13 11" style="position:absolute;left:7.8px;top:460.9px"><path d="M6.5 10.4 L12 5 L8.8 5 L8.8 1 L4.2 1 L4.2 5 L1 5 Z" fill="url(#gd)" stroke="#6a1006" stroke-width="1.5" stroke-linejoin="round"/></svg>
<span style="position:absolute;top:459.89px;font-size:11px;line-height:11px;color:#000;white-space:nowrap;-webkit-text-stroke:0.15px #000;left:23.10px;transform-origin:0 0;transform:scaleX(0.9211);">US500</span>
<span style="position:absolute;top:459.89px;font-size:11px;line-height:11px;color:#ff0000;white-space:nowrap;right:728.00px;transform-origin:100% 0;">2808.67</span>
<span style="position:absolute;top:459.89px;font-size:11px;line-height:11px;color:#ff0000;white-space:nowrap;right:660.00px;transform-origin:100% 0;">2809.37</span>
<div style="position:absolute;left:3.5px;top:475.5px;width:240.5px;height:19.3px;background:#e0eefe;"></div>
<div style="position:absolute;left:3.5px;top:494.8px;width:240.5px;height:1.2px;background:#a4a4a0;"></div>
<svg width="11.4" height="9.8" viewBox="0 0 13 11" style="position:absolute;left:7.8px;top:480.9px"><path d="M6.5 10.4 L12 5 L8.8 5 L8.8 1 L4.2 1 L4.2 5 L1 5 Z" fill="url(#gd)" stroke="#6a1006" stroke-width="1.5" stroke-linejoin="round"/></svg>
<span style="position:absolute;top:479.89px;font-size:11px;line-height:11px;color:#000;white-space:nowrap;-webkit-text-stroke:0.15px #000;left:23.10px;transform-origin:0 0;transform:scaleX(0.8754);">CADJPY</span>
<span style="position:absolute;top:479.89px;font-size:11px;line-height:11px;color:#ff0000;white-space:nowrap;right:728.00px;transform-origin:100% 0;">77.537</span>
<span style="position:absolute;top:479.89px;font-size:11px;line-height:11px;color:#ff0000;white-space:nowrap;right:660.00px;transform-origin:100% 0;transform:scaleX(0.9499);">77.572</span>
<div style="position:absolute;left:3.5px;top:495.5px;width:240.5px;height:19.3px;background:#e2fde2;"></div>
<div style="position:absolute;left:3.5px;top:514.8px;width:240.5px;height:1.2px;background:#a4a4a0;"></div>
<svg width="11.4" height="9.8" viewBox="0 0 13 11" style="position:absolute;left:7.8px;top:500.7px"><path d="M6.5 0.6 L12 6 L8.8 6 L8.8 10 L4.2 10 L4.2 6 L1 6 Z" fill="url(#gu)" stroke="#063a06" stroke-width="1.5" stroke-linejoin="round"/></svg>
<span style="position:absolute;top:499.89px;font-size:11px;line-height:11px;color:#000;white-space:nowrap;-webkit-text-stroke:0.15px #000;left:23.10px;transform-origin:0 0;transform:scaleX(0.8500);">GBPCAD</span>
<span style="position:absolute;top:499.89px;font-size:11px;line-height:11px;color:#0000ff;white-space:nowrap;right:728.00px;transform-origin:100% 0;">1.73984</span>
<span style="position:absolute;top:499.89px;font-size:11px;line-height:11px;color:#0000ff;white-space:nowrap;right:660.00px;transform-origin:100% 0;">1.74041</span>
<div style="position:absolute;left:106.2px;top:35px;width:1.2px;height:480.5px;background:#a4a4a0;"></div>
<div style="position:absolute;left:174.3px;top:35px;width:1.2px;height:480.5px;background:#a4a4a0;"></div>
<div style="position:absolute;left:244.3px;top:17px;width:0.8px;height:583px;background:#a39d8f;"></div>
<div style="position:absolute;left:245.1px;top:17px;width:0.9px;height:583px;background:#f4f2ec;"></div>
</section>
<section id="context-menu">
<div style="position:absolute;left:206px;top:104.7px;width:208px;height:398.3px;background:#fff;box-sizing:border-box;border:1.1px solid #1c1c1c;box-shadow:0 1px 1.5px rgba(0,0,0,0.35)"></div>
<div style="position:absolute;left:207.1px;top:105.8px;width:204px;height:1.2px;background:#f4f2ec;"></div>
<div style="position:absolute;left:207.1px;top:105.8px;width:1px;height:396px;background:#f4f2ec;"></div>
<div style="position:absolute;left:208.1px;top:107px;width:24.7px;height:394.7px;background:#b0a999;"></div>
<div style="position:absolute;left:411px;top:105.8px;width:1.8px;height:396px;background:#dcd9d2;"></div>
<div style="position:absolute;left:207.1px;top:499.8px;width:205.7px;height:2px;background:#dcd9d2;"></div>
<div style="position:absolute;left:209.2px;top:200.2px;width:201.8px;height:22.6px;box-sizing:border-box;background:#7183b6;border:1.3px solid #141a5c"></div>
<span style="position:absolute;top:114.99px;font-size:11px;line-height:11px;color:#000;white-space:nowrap;-webkit-text-stroke:0.15px #000;left:240.70px;transform-origin:0 0;transform:scaleX(0.9839);">Новый ордер</span>
<span style="position:absolute;top:114.99px;font-size:11px;line-height:11px;color:#000;white-space:nowrap;-webkit-text-stroke:0.15px #000;right:501.40px;transform-origin:100% 0;">F9</span>
<span style="position:absolute;top:137.99px;font-size:11px;line-height:11px;color:#000;white-space:nowrap;-webkit-text-stroke:0.15px #000;left:240.70px;transform-origin:0 0;transform:scaleX(1.0103);">Окно графика</span>
<span style="position:absolute;top:160.99px;font-size:11px;line-height:11px;color:#000;white-space:nowrap;-webkit-text-stroke:0.15px #000;left:240.70px;transform-origin:0 0;transform:scaleX(1.0163);">Тиковый график</span>
<span style="position:absolute;top:160.99px;font-size:11px;line-height:11px;color:#000;white-space:nowrap;-webkit-text-stroke:0.15px #000;right:501.40px;transform-origin:100% 0;">Space</span>
<span style="position:absolute;top:183.99px;font-size:11px;line-height:11px;color:#000;white-space:nowrap;-webkit-text-stroke:0.15px #000;left:240.70px;transform-origin:0 0;transform:scaleX(1.0060);">Стакан цен</span>
<span style="position:absolute;top:183.99px;font-size:11px;line-height:11px;color:#000;white-space:nowrap;-webkit-text-stroke:0.15px #000;right:501.40px;transform-origin:100% 0;">Alt+B</span>
<span style="position:absolute;top:206.99px;font-size:11px;line-height:11px;color:#000;white-space:nowrap;-webkit-text-stroke:0.15px #000;left:240.70px;transform-origin:0 0;transform:scaleX(0.9715);">Спецификация</span>
<span style="position:absolute;top:238.29px;font-size:11px;line-height:11px;color:#000;white-space:nowrap;-webkit-text-stroke:0.15px #000;left:240.70px;transform-origin:0 0;">Удалить символ</span>
<span style="position:absolute;top:238.29px;font-size:11px;line-height:11px;color:#000;white-space:nowrap;-webkit-text-stroke:0.15px #000;right:501.40px;transform-origin:100% 0;">Delete</span>
<span style="position:absolute;top:261.29px;font-size:11px;line-height:11px;color:#000;white-space:nowrap;-webkit-text-stroke:0.15px #000;left:240.70px;transform-origin:0 0;transform:scaleX(0.9891);">Скрыть все символы</span>
<span style="position:absolute;top:284.29px;font-size:11px;line-height:11px;color:#000;white-space:nowrap;-webkit-text-stroke:0.15px #000;left:240.70px;transform-origin:0 0;transform:scaleX(0.9879);">Показать все символы</span>
<span style="position:absolute;top:307.29px;font-size:11px;line-height:11px;color:#000;white-space:nowrap;-webkit-text-stroke:0.15px #000;left:240.70px;transform-origin:0 0;transform:scaleX(0.9458);">Символы</span>
<span style="position:absolute;top:307.29px;font-size:11px;line-height:11px;color:#000;white-space:nowrap;-webkit-text-stroke:0.15px #000;right:501.40px;transform-origin:100% 0;">Ctrl+U</span>
<span style="position:absolute;top:330.29px;font-size:11px;line-height:11px;color:#000;white-space:nowrap;-webkit-text-stroke:0.15px #000;left:240.70px;transform-origin:0 0;transform:scaleX(0.9529);">Набор символов</span>
<span style="position:absolute;top:361.29px;font-size:11px;line-height:11px;color:#000;white-space:nowrap;-webkit-text-stroke:0.15px #000;left:240.70px;transform-origin:0 0;transform:scaleX(0.9589);">Спред</span>
<span style="position:absolute;top:384.29px;font-size:11px;line-height:11px;color:#000;white-space:nowrap;-webkit-text-stroke:0.15px #000;left:240.70px;transform-origin:0 0;transform:scaleX(0.9344);">Максимум/Минимум</span>
<span style="position:absolute;top:407.29px;font-size:11px;line-height:11px;color:#000;white-space:nowrap;-webkit-text-stroke:0.15px #000;left:240.70px;transform-origin:0 0;transform:scaleX(0.9061);">Время</span>
<span style="position:absolute;top:430.29px;font-size:11px;line-height:11px;color:#000;white-space:nowrap;-webkit-text-stroke:0.15px #000;left:240.70px;transform-origin:0 0;transform:scaleX(0.9893);">Авторазмер столбцов</span>
<span style="position:absolute;top:453.29px;font-size:11px;line-height:11px;color:#000;white-space:nowrap;-webkit-text-stroke:0.15px #000;left:240.70px;transform-origin:0 0;transform:scaleX(1.0366);">Сетка</span>
<span style="position:absolute;top:484.29px;font-size:11px;line-height:11px;color:#000;white-space:nowrap;-webkit-text-stroke:0.15px #000;left:240.70px;transform-origin:0 0;transform:scaleX(1.0434);">Окно котировок</span>
<span style="position:absolute;top:484.29px;font-size:11px;line-height:11px;color:#000;white-space:nowrap;-webkit-text-stroke:0.15px #000;right:501.40px;transform-origin:100% 0;">F10</span>
<div style="position:absolute;left:240.5px;top:226.9px;width:170px;height:1.0px;background:#aaa69a;"></div>
<div style="position:absolute;left:240.5px;top:349.9px;width:170px;height:1.0px;background:#aaa69a;"></div>
<div style="position:absolute;left:240.5px;top:472.9px;width:170px;height:1.0px;background:#aaa69a;"></div>
<svg width="5" height="7" viewBox="0 0 5 7" style="position:absolute;left:399.5px;top:331.8px"><path d="M0.5 0.3 L4 3.5 L0.5 6.7 Z" fill="#000"/></svg>
<svg width="7.8" height="6.6" viewBox="0 0 9 8" style="position:absolute;left:217.3px;top:432.3px"><path d="M0.8 3.6 L3.2 6.2 L8 1" stroke="#111" stroke-width="2" fill="none"/></svg>
<svg width="7.8" height="6.6" viewBox="0 0 9 8" style="position:absolute;left:217.3px;top:455.3px"><path d="M0.8 3.6 L3.2 6.2 L8 1" stroke="#111" stroke-width="2" fill="none"/></svg>
<svg width="17" height="19" viewBox="0 0 17 19" style="position:absolute;left:212.5px;top:111.5px"><path d="M1.2 1.3 H9 L11.7 4 V13.3 H1.2 Z" fill="#fff" stroke="#222" stroke-width="1.1"/><path d="M9 1.3 V4 H11.7" fill="none" stroke="#222" stroke-width="0.9"/><rect x="2.6" y="2.9" width="2.7" height="1.4" fill="#444"/><path d="M2.6 6.5 H8.2 M2.6 8.8 H8.2 M2.6 10.9 H6" stroke="#555" stroke-width="1"/><path d="M6.999999999999999 12.8 H15.399999999999999 M11.2 8.600000000000001 V17.0" stroke="#0a4a0a" stroke-width="3.6"/><path d="M7.799999999999999 12.8 H14.599999999999998 M11.2 9.400000000000002 V16.2" stroke="#2cf02c" stroke-width="1.9"/></svg>
<svg width="17" height="19" viewBox="0 0 17 19" style="position:absolute;left:212.5px;top:134.5px"><rect x="0.9" y="3" width="11.8" height="10.2" rx="1.2" fill="#f8fbff" stroke="#2346a8" stroke-width="1.3"/><rect x="0.9" y="3" width="11.8" height="2.3" fill="#3560c8"/><path d="M4 6.5 V11.5 M2.8 7.7 L4 6.5 L5.2 7.7 M2.8 10.3 L4 11.5 L5.2 10.3" stroke="#333" stroke-width="0.9" fill="none"/><path d="M6.8 12.2 H15.2 M11 7.999999999999999 V16.4" stroke="#0a4a0a" stroke-width="3.6"/><path d="M7.6 12.2 H14.399999999999999 M11 8.799999999999999 V15.599999999999998" stroke="#2cf02c" stroke-width="1.9"/></svg>
<svg width="17" height="19" viewBox="0 0 17 19" style="position:absolute;left:212.5px;top:158px"><path d="M3 12.9 H15.3 V3.6" stroke="#7a7468" stroke-width="1.2" fill="none"/><rect x="2" y="2.6" width="12.4" height="9.4" fill="#fbfbf6" stroke="#666" stroke-width="1"/><path d="M3.6 9.6 L5 7.6 L6.1 9 L7.5 6.6 L8.8 9.6 L10 6.1 L11.3 9 L12.7 5.6" stroke="#186018" stroke-width="1.2" fill="none"/><path d="M3.6 4.5 H5.6" stroke="#333" stroke-width="1"/></svg>
<svg width="17" height="19" viewBox="0 0 17 19" style="position:absolute;left:212.5px;top:181px"><rect x="0.9" y="1.6" width="15.3" height="12.7" rx="1.2" fill="#2a58c8" stroke="#1c3c9c" stroke-width="1.3"/><path d="M2.2 2.9 H15" stroke="#a8c8ff" stroke-width="0.9"/><rect x="1.7" y="4.4" width="6.7" height="9.3" fill="#b4f070"/><rect x="8.7" y="4.4" width="6.7" height="9.3" fill="#f08474"/><path d="M2.9 6.5 H5 M5.7 6.5 H7.7 M9.8 6.5 H11.9 M12.5 6.5 H14.5 M2.9 9.4 H5 M5.7 9.4 H7.7 M9.8 9.4 H11.9 M12.5 9.4 H14.5 M2.9 12.3 H5 M5.7 12.3 H7.7 M9.8 12.3 H11.9 M12.5 12.3 H14.5" stroke="#1a1a1a" stroke-width="1.2"/></svg>
<svg width="17" height="19" viewBox="0 0 17 19" style="position:absolute;left:211.8px;top:204px"><rect x="0.2" y="0.7" width="14" height="12.8" rx="3" fill="#f6ac28" stroke="#a86a04" stroke-width="1.2"/><rect x="1.6" y="2" width="11.2" height="10.2" rx="2" fill="none" stroke="#fcd070" stroke-width="1"/><text x="7.2" y="11" font-size="11.5" text-anchor="middle" fill="#6a3200" font-family="Liberation Serif">$</text></svg>
<svg width="17" height="19" viewBox="0 0 17 19" style="position:absolute;left:212.5px;top:481px"><rect x="1" y="1" width="14.5" height="13.5" fill="#02021c" stroke="#243a8a" stroke-width="1.2"/><path d="M3 4.5 H7 M3 7 H7 M3 9.5 H7 M3 12 H7" stroke="#fff" stroke-width="1.2"/><path d="M9 4.5 H10.5 M9 7 H10.5 M9 9.5 H10.5 M9 12 H10.5" stroke="#f44" stroke-width="1.2"/><path d="M12 4.5 H13.5 M12 7 H13.5 M12 9.5 H13.5 M12 12 H13.5" stroke="#58f" stroke-width="1.2"/></svg>
</section>
<section id="spec-dialog">
<div style="position:absolute;left:414px;top:1.5px;width:439px;height:583.2px;background:#b0a999;box-sizing:border-box;border-right:1px solid #111;border-bottom:1px solid #111;box-shadow:inset -1.2px -1.2px 0 #66625a"></div>
<div style="position:absolute;left:414px;top:2.7px;width:437px;height:1.4px;background:#fbfaf6;"></div>
<div style="position:absolute;left:414px;top:2.7px;width:1.3px;height:580px;background:#fbfaf6;"></div>
<div style="position:absolute;left:417px;top:6.1px;width:432px;height:18.7px;background:linear-gradient(90deg,#02032c 0%,#060c40 35%,#1f3f90 62%,#4a76c8 82%,#6c9ce4 100%)"></div>
<svg width="17" height="17" viewBox="0 0 17 17" style="position:absolute;left:419px;top:7px"><rect x="4" y="0.5" width="7" height="4" rx="1.5" fill="#e03030"/><rect x="5" y="1.5" width="5" height="1.2" fill="#fbb"/><rect x="9" y="5" width="6" height="7" fill="#2040a0"/><path d="M11 6 V11 M13 7 V10" stroke="#8cf" stroke-width="1"/><rect x="0.6" y="5.6" width="7.8" height="8.8" rx="1" fill="#20d020" stroke="#0a700a" stroke-width="0.8"/><text x="4.5" y="13" font-size="7.5" font-weight="bold" text-anchor="middle" fill="#0a5a0a" font-family="Liberation Sans">$</text></svg>
<span style="position:absolute;top:10.27px;font-size:11.5px;line-height:11.5px;color:#fff;white-space:nowrap;font-weight:bold;left:438.30px;transform-origin:0 0;transform:scaleX(0.9801);">Спецификация</span>
<span style="position:absolute;top:10.27px;font-size:11.5px;line-height:11.5px;color:#fff;white-space:nowrap;font-weight:bold;left:526.70px;transform-origin:0 0;transform:scaleX(1.0835);">контракта</span>
<span style="position:absolute;top:10.27px;font-size:11.5px;line-height:11.5px;color:#fff;white-space:nowrap;font-weight:bold;left:592.00px;transform-origin:0 0;transform:scaleX(0.9214);">USDJPY</span>
<div style="position:absolute;left:813px;top:7.9px;width:15.7px;height:14.8px;background:#b0a999;box-sizing:border-box;border-top:1px solid #fff;border-left:1px solid #fff;border-right:1.5px solid #222;border-bottom:1.5px solid #222"></div>
<div style="position:absolute;left:831px;top:7.9px;width:15.7px;height:14.8px;background:#b0a999;box-sizing:border-box;border-top:1px solid #fff;border-left:1px solid #fff;border-right:1.5px solid #222;border-bottom:1.5px solid #222"></div>
<span style="position:absolute;top:9.84px;font-size:12px;line-height:12px;color:#000;white-space:nowrap;font-weight:bold;-webkit-text-stroke:0.4px #000;left:816.80px;transform-origin:0 0;">?</span>
<svg width="9" height="9" viewBox="0 0 9 9" style="position:absolute;left:834px;top:10.8px"><path d="M1 1 L8 8 M8 1 L1 8" stroke="#000" stroke-width="2.3"/></svg>
<div style="position:absolute;left:425px;top:34px;width:415.8px;height:505.5px;background:#fff;"></div>
<div style="position:absolute;left:425px;top:34px;width:413.8px;height:504px;background:#1a1a1a;"></div>
<div style="position:absolute;left:427px;top:36px;width:411.8px;height:502px;background:#fff;"></div>
<div style="position:absolute;left:427px;top:36px;width:396px;height:19.4px;background:#d9d9d9;"></div>
<div style="position:absolute;left:427px;top:55.4px;width:396px;height:1.2px;background:#a8a8a8;"></div>
<span style="position:absolute;top:40.69px;font-size:11px;line-height:11px;color:#000;white-space:nowrap;-webkit-text-stroke:0.3px #000;left:435.40px;transform-origin:0 0;transform:scaleX(1.0208);">Спред</span>
<span style="position:absolute;top:40.69px;font-size:11px;line-height:11px;color:#000;white-space:nowrap;-webkit-text-stroke:0.3px #000;right:82.00px;transform-origin:100% 0;transform:scaleX(1.0166);">Плавающий</span>
<div style="position:absolute;left:427px;top:56px;width:396px;height:19.4px;background:#fff;"></div>
<div style="position:absolute;left:427px;top:75.4px;width:396px;height:1.2px;background:#a8a8a8;"></div>
<span style="position:absolute;top:60.69px;font-size:11px;line-height:11px;color:#000;white-space:nowrap;-webkit-text-stroke:0.3px #000;left:435.40px;transform-origin:0 0;transform:scaleX(1.0663);">Точность</span>
<span style="position:absolute;top:60.69px;font-size:11px;line-height:11px;color:#000;white-space:nowrap;-webkit-text-stroke:0.3px #000;right:82.00px;transform-origin:100% 0;transform:scaleX(0.9633);">3</span>
<div style="position:absolute;left:427px;top:76px;width:396px;height:19.4px;background:#d9d9d9;"></div>
<div style="position:absolute;left:427px;top:95.4px;width:396px;height:1.2px;background:#a8a8a8;"></div>
<span style="position:absolute;top:80.69px;font-size:11px;line-height:11px;color:#000;white-space:nowrap;-webkit-text-stroke:0.3px #000;left:435.40px;transform-origin:0 0;transform:scaleX(1.0637);">Уровень стопов</span>
<span style="position:absolute;top:80.69px;font-size:11px;line-height:11px;color:#000;white-space:nowrap;-webkit-text-stroke:0.3px #000;right:82.00px;transform-origin:100% 0;transform:scaleX(0.9633);">10</span>
<div style="position:absolute;left:427px;top:96px;width:396px;height:19.4px;background:#fff;"></div>
<div style="position:absolute;left:427px;top:115.4px;width:396px;height:1.2px;background:#a8a8a8;"></div>
<span style="position:absolute;top:100.69px;font-size:11px;line-height:11px;color:#000;white-space:nowrap;-webkit-text-stroke:0.3px #000;left:435.40px;transform-origin:0 0;transform:scaleX(1.0449);">Размер контракта</span>
<span style="position:absolute;top:100.69px;font-size:11px;line-height:11px;color:#000;white-space:nowrap;-webkit-text-stroke:0.3px #000;right:82.00px;transform-origin:100% 0;transform:scaleX(0.9687);">100000</span>
<div style="position:absolute;left:427px;top:116px;width:396px;height:19.4px;background:#d9d9d9;"></div>
<div style="position:absolute;left:427px;top:135.4px;width:396px;height:1.2px;background:#a8a8a8;"></div>
<span style="position:absolute;top:120.69px;font-size:11px;line-height:11px;color:#000;white-space:nowrap;-webkit-text-stroke:0.3px #000;left:435.40px;transform-origin:0 0;transform:scaleX(1.0410);">Валюта маржи</span>
<span style="position:absolute;top:120.69px;font-size:11px;line-height:11px;color:#000;white-space:nowrap;-webkit-text-stroke:0.3px #000;right:82.00px;transform-origin:100% 0;transform:scaleX(0.8915);">USD</span>
<div style="position:absolute;left:427px;top:136px;width:396px;height:19.4px;background:#fff;"></div>
<div style="position:absolute;left:427px;top:155.4px;width:396px;height:1.2px;background:#a8a8a8;"></div>
<span style="position:absolute;top:140.69px;font-size:11px;line-height:11px;color:#000;white-space:nowrap;-webkit-text-stroke:0.3px #000;left:435.40px;transform-origin:0 0;transform:scaleX(1.0495);">Способ вычисления пр...</span>
<span style="position:absolute;top:140.69px;font-size:11px;line-height:11px;color:#000;white-space:nowrap;-webkit-text-stroke:0.3px #000;right:82.00px;transform-origin:100% 0;transform:scaleX(1.0062);">Forex</span>
<div style="position:absolute;left:427px;top:156px;width:396px;height:19.4px;background:#d9d9d9;"></div>
<div style="position:absolute;left:427px;top:175.4px;width:396px;height:1.2px;background:#a8a8a8;"></div>
<span style="position:absolute;top:160.69px;font-size:11px;line-height:11px;color:#000;white-space:nowrap;-webkit-text-stroke:0.3px #000;left:435.40px;transform-origin:0 0;transform:scaleX(1.0364);">Способ вычисления ма...</span>
<span style="position:absolute;top:160.69px;font-size:11px;line-height:11px;color:#000;white-space:nowrap;-webkit-text-stroke:0.3px #000;right:82.00px;transform-origin:100% 0;transform:scaleX(1.0062);">Forex</span>
<div style="position:absolute;left:427px;top:176px;width:396px;height:19.4px;background:#fff;"></div>
<div style="position:absolute;left:427px;top:195.4px;width:396px;height:1.2px;background:#a8a8a8;"></div>
<span style="position:absolute;top:180.69px;font-size:11px;line-height:11px;color:#000;white-space:nowrap;-webkit-text-stroke:0.3px #000;left:435.40px;transform-origin:0 0;transform:scaleX(1.0556);">Хеджированная маржа</span>
<span style="position:absolute;top:180.69px;font-size:11px;line-height:11px;color:#000;white-space:nowrap;-webkit-text-stroke:0.3px #000;right:82.00px;transform-origin:100% 0;transform:scaleX(0.9578);">25000.00</span>
<div style="position:absolute;left:427px;top:196px;width:396px;height:19.4px;background:#d9d9d9;"></div>
<div style="position:absolute;left:427px;top:215.4px;width:396px;height:1.2px;background:#a8a8a8;"></div>
<span style="position:absolute;top:200.69px;font-size:11px;line-height:11px;color:#000;white-space:nowrap;-webkit-text-stroke:0.3px #000;left:435.40px;transform-origin:0 0;transform:scaleX(1.0808);">Процент маржи</span>
<span style="position:absolute;top:200.69px;font-size:11px;line-height:11px;color:#000;white-space:nowrap;-webkit-text-stroke:0.3px #000;right:82.00px;transform-origin:100% 0;transform:scaleX(0.9747);">100.0%</span>
<div style="position:absolute;left:427px;top:216px;width:396px;height:19.4px;background:#fff;"></div>
<div style="position:absolute;left:427px;top:235.4px;width:396px;height:1.2px;background:#a8a8a8;"></div>
<span style="position:absolute;top:220.69px;font-size:11px;line-height:11px;color:#000;white-space:nowrap;-webkit-text-stroke:0.3px #000;left:435.40px;transform-origin:0 0;transform:scaleX(1.0656);">Торговля</span>
<span style="position:absolute;top:220.69px;font-size:11px;line-height:11px;color:#000;white-space:nowrap;-webkit-text-stroke:0.3px #000;right:84.40px;transform-origin:100% 0;transform:scaleX(1.0376);">Полный доступ</span>
<div style="position:absolute;left:427px;top:236px;width:396px;height:19.4px;background:#d9d9d9;"></div>
<div style="position:absolute;left:427px;top:255.4px;width:396px;height:1.2px;background:#a8a8a8;"></div>
<span style="position:absolute;top:240.69px;font-size:11px;line-height:11px;color:#000;white-space:nowrap;-webkit-text-stroke:0.3px #000;left:435.40px;transform-origin:0 0;transform:scaleX(1.0608);">Исполнение</span>
<span style="position:absolute;top:240.69px;font-size:11px;line-height:11px;color:#000;white-space:nowrap;-webkit-text-stroke:0.3px #000;right:82.00px;transform-origin:100% 0;transform:scaleX(1.0621);">По рынку</span>
<div style="position:absolute;left:427px;top:256px;width:396px;height:19.4px;background:#fff;"></div>
<div style="position:absolute;left:427px;top:275.4px;width:396px;height:1.2px;background:#a8a8a8;"></div>
<span style="position:absolute;top:260.69px;font-size:11px;line-height:11px;color:#000;white-space:nowrap;-webkit-text-stroke:0.3px #000;left:435.40px;transform-origin:0 0;transform:scaleX(1.0620);">Тип ордеров</span>
<span style="position:absolute;top:260.69px;font-size:11px;line-height:11px;color:#000;white-space:nowrap;-webkit-text-stroke:0.3px #000;right:82.00px;transform-origin:100% 0;transform:scaleX(1.0262);">Отложенные ордеры GTC</span>
<div style="position:absolute;left:427px;top:276px;width:396px;height:19.4px;background:#d9d9d9;"></div>
<div style="position:absolute;left:427px;top:295.4px;width:396px;height:1.2px;background:#a8a8a8;"></div>
<span style="position:absolute;top:280.69px;font-size:11px;line-height:11px;color:#000;white-space:nowrap;-webkit-text-stroke:0.3px #000;left:435.40px;transform-origin:0 0;transform:scaleX(1.0680);">Минимальный объем</span>
<span style="position:absolute;top:280.69px;font-size:11px;line-height:11px;color:#000;white-space:nowrap;-webkit-text-stroke:0.3px #000;right:82.00px;transform-origin:100% 0;transform:scaleX(0.9516);">0.01</span>
<div style="position:absolute;left:427px;top:296px;width:396px;height:19.4px;background:#fff;"></div>
<div style="position:absolute;left:427px;top:315.4px;width:396px;height:1.2px;background:#a8a8a8;"></div>
<span style="position:absolute;top:300.69px;font-size:11px;line-height:11px;color:#000;white-space:nowrap;-webkit-text-stroke:0.3px #000;left:435.40px;transform-origin:0 0;transform:scaleX(1.0524);">Максимальный объем</span>
<span style="position:absolute;top:300.69px;font-size:11px;line-height:11px;color:#000;white-space:nowrap;-webkit-text-stroke:0.3px #000;right:82.00px;transform-origin:100% 0;transform:scaleX(0.9618);">100.00</span>
<div style="position:absolute;left:427px;top:316px;width:396px;height:19.4px;background:#d9d9d9;"></div>
<div style="position:absolute;left:427px;top:335.4px;width:396px;height:1.2px;background:#a8a8a8;"></div>
<span style="position:absolute;top:320.69px;font-size:11px;line-height:11px;color:#000;white-space:nowrap;-webkit-text-stroke:0.3px #000;left:435.40px;transform-origin:0 0;transform:scaleX(1.0575);">Шаг объема</span>
<span style="position:absolute;top:320.69px;font-size:11px;line-height:11px;color:#000;white-space:nowrap;-webkit-text-stroke:0.3px #000;right:82.00px;transform-origin:100% 0;transform:scaleX(0.9516);">0.01</span>
<div style="position:absolute;left:427px;top:336px;width:396px;height:19.4px;background:#fff;"></div>
<div style="position:absolute;left:427px;top:355.4px;width:396px;height:1.2px;background:#a8a8a8;"></div>
<span style="position:absolute;top:340.69px;font-size:11px;line-height:11px;color:#000;white-space:nowrap;-webkit-text-stroke:0.3px #000;left:435.40px;transform-origin:0 0;transform:scaleX(1.0352);">Тип свопа</span>
<span style="position:absolute;top:340.69px;font-size:11px;line-height:11px;color:#000;white-space:nowrap;-webkit-text-stroke:0.3px #000;right:82.00px;transform-origin:100% 0;transform:scaleX(1.0374);">в пунктах</span>
<div style="position:absolute;left:427px;top:356px;width:396px;height:19.4px;background:#d9d9d9;"></div>
<div style="position:absolute;left:427px;top:375.4px;width:396px;height:1.2px;background:#a8a8a8;"></div>
<span style="position:absolute;top:360.69px;font-size:11px;line-height:11px;color:#000;white-space:nowrap;-webkit-text-stroke:0.3px #000;left:435.40px;transform-origin:0 0;transform:scaleX(1.0667);">Своп длинных позиций</span>
<span style="position:absolute;top:360.69px;font-size:11px;line-height:11px;color:#000;white-space:nowrap;-webkit-text-stroke:0.3px #000;right:82.00px;transform-origin:100% 0;transform:scaleX(0.9796);">2.2</span>
<div style="position:absolute;left:427px;top:376px;width:396px;height:19.4px;background:#fff;"></div>
<div style="position:absolute;left:427px;top:395.4px;width:396px;height:1.2px;background:#a8a8a8;"></div>
<span style="position:absolute;top:380.69px;font-size:11px;line-height:11px;color:#000;white-space:nowrap;-webkit-text-stroke:0.3px #000;left:435.40px;transform-origin:0 0;transform:scaleX(1.0970);">Своп коротких позиций</span>
<span style="position:absolute;top:380.69px;font-size:11px;line-height:11px;color:#000;white-space:nowrap;-webkit-text-stroke:0.3px #000;right:82.00px;transform-origin:100% 0;transform:scaleX(0.9647);">-9.5</span>
<div style="position:absolute;left:427px;top:396px;width:396px;height:19.4px;background:#d9d9d9;"></div>
<div style="position:absolute;left:427px;top:415.4px;width:396px;height:1.2px;background:#a8a8a8;"></div>
<span style="position:absolute;top:400.69px;font-size:11px;line-height:11px;color:#000;white-space:nowrap;-webkit-text-stroke:0.3px #000;left:435.40px;transform-origin:0 0;transform:scaleX(1.0858);">День тройного свопа</span>
<span style="position:absolute;top:400.69px;font-size:11px;line-height:11px;color:#000;white-space:nowrap;-webkit-text-stroke:0.3px #000;right:82.00px;transform-origin:100% 0;transform:scaleX(0.9754);">Среда</span>
<div style="position:absolute;left:427px;top:416px;width:396px;height:19.4px;background:#fff;"></div>
<div style="position:absolute;left:427px;top:435.4px;width:396px;height:1.2px;background:#a8a8a8;"></div>
<span style="position:absolute;top:420.69px;font-size:11px;line-height:11px;color:#000;white-space:nowrap;font-weight:bold;-webkit-text-stroke:0.3px #000;left:435.40px;transform-origin:0 0;transform:scaleX(0.9218);">Сессии</span>
<span style="position:absolute;top:420.69px;font-size:11px;line-height:11px;color:#000;white-space:nowrap;font-weight:bold;-webkit-text-stroke:0.15px #000;left:599.90px;transform-origin:0 0;transform:scaleX(1.0167);">Котировочные</span>
<span style="position:absolute;top:420.69px;font-size:11px;line-height:11px;color:#000;white-space:nowrap;font-weight:bold;-webkit-text-stroke:0.15px #000;left:712.70px;transform-origin:0 0;transform:scaleX(1.0074);">Торговые</span>
<div style="position:absolute;left:427px;top:436px;width:396px;height:19.4px;background:#d9d9d9;"></div>
<div style="position:absolute;left:427px;top:455.4px;width:396px;height:1.2px;background:#a8a8a8;"></div>
<span style="position:absolute;top:440.69px;font-size:11px;line-height:11px;color:#000;white-space:nowrap;-webkit-text-stroke:0.3px #000;left:435.40px;transform-origin:0 0;transform:scaleX(1.0306);">Воскресенье</span>
<div style="position:absolute;left:427px;top:456px;width:396px;height:19.4px;background:#fff;"></div>
<div style="position:absolute;left:427px;top:475.4px;width:396px;height:1.2px;background:#a8a8a8;"></div>
<span style="position:absolute;top:460.69px;font-size:11px;line-height:11px;color:#000;white-space:nowrap;-webkit-text-stroke:0.3px #000;left:435.40px;transform-origin:0 0;transform:scaleX(1.0686);">Понедельник</span>
<span style="position:absolute;top:460.69px;font-size:11px;line-height:11px;color:#000;white-space:nowrap;-webkit-text-stroke:0.3px #000;left:599.50px;transform-origin:0 0;transform:scaleX(0.9867);">00:00-24:00</span>
<span style="position:absolute;top:460.69px;font-size:11px;line-height:11px;color:#000;white-space:nowrap;-webkit-text-stroke:0.3px #000;left:712.80px;transform-origin:0 0;transform:scaleX(0.9867);">00:05-23:55</span>
<div style="position:absolute;left:427px;top:476px;width:396px;height:19.4px;background:#d9d9d9;"></div>
<div style="position:absolute;left:427px;top:495.4px;width:396px;height:1.2px;background:#a8a8a8;"></div>
<span style="position:absolute;top:480.69px;font-size:11px;line-height:11px;color:#000;white-space:nowrap;-webkit-text-stroke:0.3px #000;left:435.40px;transform-origin:0 0;transform:scaleX(1.1173);">Вторник</span>
<span style="position:absolute;top:480.69px;font-size:11px;line-height:11px;color:#000;white-space:nowrap;-webkit-text-stroke:0.3px #000;left:599.50px;transform-origin:0 0;transform:scaleX(0.9867);">00:00-24:00</span>
<span style="position:absolute;top:480.69px;font-size:11px;line-height:11px;color:#000;white-space:nowrap;-webkit-text-stroke:0.3px #000;left:712.80px;transform-origin:0 0;transform:scaleX(0.9867);">00:05-23:55</span>
<div style="position:absolute;left:427px;top:496px;width:396px;height:19.4px;background:#fff;"></div>
<div style="position:absolute;left:427px;top:515.4px;width:396px;height:1.2px;background:#a8a8a8;"></div>
<span style="position:absolute;top:500.69px;font-size:11px;line-height:11px;color:#000;white-space:nowrap;-webkit-text-stroke:0.3px #000;left:435.40px;transform-origin:0 0;transform:scaleX(0.9754);">Среда</span>
<span style="position:absolute;top:500.69px;font-size:11px;line-height:11px;color:#000;white-space:nowrap;-webkit-text-stroke:0.3px #000;left:599.50px;transform-origin:0 0;transform:scaleX(0.9867);">00:00-24:00</span>
<span style="position:absolute;top:500.69px;font-size:11px;line-height:11px;color:#000;white-space:nowrap;-webkit-text-stroke:0.3px #000;left:712.80px;transform-origin:0 0;transform:scaleX(0.9867);">00:05-23:55</span>
<div style="position:absolute;left:427px;top:516px;width:396px;height:19.4px;background:#d9d9d9;"></div>
<div style="position:absolute;left:427px;top:535.4px;width:396px;height:1.2px;background:#a8a8a8;"></div>
<span style="position:absolute;top:520.69px;font-size:11px;line-height:11px;color:#000;white-space:nowrap;-webkit-text-stroke:0.3px #000;left:435.40px;transform-origin:0 0;transform:scaleX(1.0600);">Четверг</span>
<span style="position:absolute;top:520.69px;font-size:11px;line-height:11px;color:#000;white-space:nowrap;-webkit-text-stroke:0.3px #000;left:599.50px;transform-origin:0 0;transform:scaleX(0.9867);">00:00-24:00</span>
<span style="position:absolute;top:520.69px;font-size:11px;line-height:11px;color:#000;white-space:nowrap;-webkit-text-stroke:0.3px #000;left:712.80px;transform-origin:0 0;transform:scaleX(0.9867);">00:05-23:55</span>
<div style="position:absolute;left:593.8px;top:36px;width:1.2px;height:502px;background:#a8a8a8;"></div>
<div style="position:absolute;left:706.8px;top:416px;width:1.2px;height:122px;background:#a8a8a8;"></div>
<div style="position:absolute;left:823px;top:36px;width:15.8px;height:502px;background:#d6d2ca;"></div>
<div style="position:absolute;left:823px;top:486px;width:15.8px;height:36.5px;background:repeating-conic-gradient(#fff 0% 25%, #b0a999 0% 50%) 0 0/2px 2px"></div>
<div style="position:absolute;left:823px;top:36.3px;width:15.8px;height:15.2px;background:#b0a999;box-sizing:border-box;border-top:1px solid #f4f2ec;border-left:1px solid #f4f2ec;border-right:1.5px solid #333;border-bottom:1.5px solid #333"></div>
<div style="position:absolute;left:823px;top:51.7px;width:15.8px;height:434.3px;background:#b0a999;box-sizing:border-box;border-top:1px solid #f4f2ec;border-left:1px solid #f4f2ec;border-right:1.5px solid #333;border-bottom:1.5px solid #333"></div>
<div style="position:absolute;left:823px;top:522.3px;width:15.8px;height:15.5px;background:#b0a999;box-sizing:border-box;border-top:1px solid #f4f2ec;border-left:1px solid #f4f2ec;border-right:1.5px solid #333;border-bottom:1.5px solid #333"></div>
<svg width="8" height="5" viewBox="0 0 8 5" style="position:absolute;left:826.7px;top:41.5px"><path d="M4 0.3 L7.7 4.5 L0.3 4.5 Z" fill="#000"/></svg>
<svg width="8" height="5" viewBox="0 0 8 5" style="position:absolute;left:826.7px;top:528px"><path d="M4 4.7 L7.7 0.5 L0.3 0.5 Z" fill="#000"/></svg>
<div style="position:absolute;left:588px;top:549.5px;width:90px;height:23px;background:#b0a999;box-sizing:border-box;border:1.3px solid #111;box-shadow:inset 1px 1px 0 #f4f2ec, inset -1.5px -1.5px 0 #555"></div>
<span style="position:absolute;top:555.69px;font-size:11px;line-height:11px;color:#000;white-space:nowrap;-webkit-text-stroke:0.15px #000;left:610.70px;transform-origin:0 0;transform:scaleX(1.0478);">Закрыть</span>
</section>
<section id="annotations">
<svg width="900" height="600" viewBox="0 0 900 600" style="position:absolute;left:0;top:0;pointer-events:none"><rect x="418.9" y="337.5" width="409.5" height="78.6" rx="8.5" ry="8.5" fill="none" stroke="#f80000" stroke-width="3.1"/><path d="M620.7 258.7 H651.7 V296.5 H667 L636.5 333.6 L606 296.5 H620.7 Z" fill="none" stroke="#f80000" stroke-width="3" stroke-linejoin="miter"/></svg>
<span style="position:absolute;top:222.54px;font-size:18.5px;line-height:18.5px;color:#ff0a0a;white-space:nowrap;font-weight:bold;-webkit-text-stroke:0.5px #ff0a0a;left:531.90px;transform-origin:0 0;transform:scaleX(0.9673);">параметры</span>
<span style="position:absolute;top:222.54px;font-size:18.5px;line-height:18.5px;color:#ff0a0a;white-space:nowrap;font-weight:bold;-webkit-text-stroke:0.5px #ff0a0a;left:640.20px;transform-origin:0 0;transform:scaleX(0.9594);">свопа</span>
</section>
</div></body></html>
